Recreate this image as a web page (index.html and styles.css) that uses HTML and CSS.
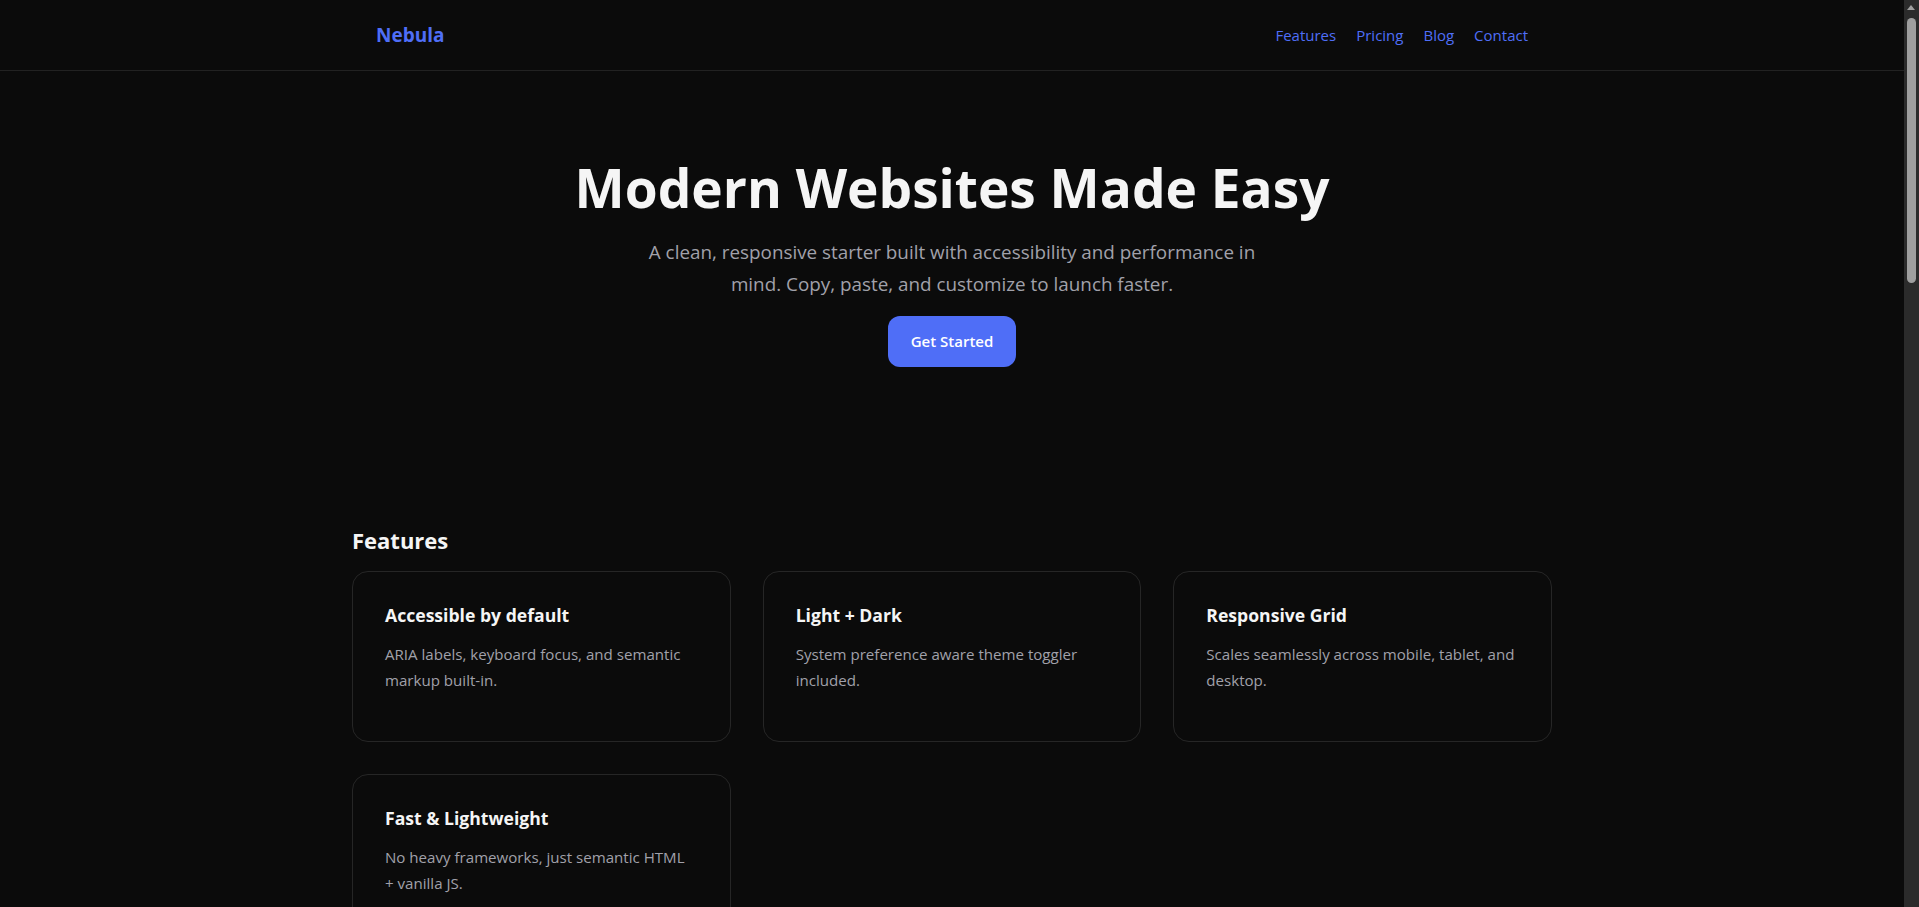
FILE: index.html
```html
<!DOCTYPE html>
<html lang="en">
<head>
<meta charset="utf-8">
<meta name="viewport" content="width=device-width, initial-scale=1">
<title>Nebula — Modern Websites Made Easy</title>
<link rel="stylesheet" href="styles.css">
</head>
<body>
<header class="site-header">
  <div class="container header-bar">
    <a class="logo" href="#">Nebula</a>
    <nav aria-label="Primary">
      <ul class="nav-list">
        <li><a href="#features">Features</a></li>
        <li><a href="#pricing">Pricing</a></li>
        <li><a href="#blog">Blog</a></li>
        <li><a href="#contact">Contact</a></li>
      </ul>
    </nav>
  </div>
</header>

<main>
  <section class="hero">
    <h1 class="hero-title">Modern Websites Made Easy</h1>
    <p class="hero-text">A clean, responsive starter built with accessibility and performance in mind. Copy, paste, and customize to launch faster.</p>
    <a class="btn" href="#features">Get Started</a>
  </section>

  <section class="container features" id="features">
    <h2 class="section-title">Features</h2>
    <div class="card-grid">
      <article class="card">
        <h3 class="card-title">Accessible by default</h3>
        <p class="card-text">ARIA labels, keyboard focus, and semantic markup built-in.</p>
      </article>
      <article class="card">
        <h3 class="card-title">Light + Dark</h3>
        <p class="card-text">System preference aware theme toggler included.</p>
      </article>
      <article class="card">
        <h3 class="card-title">Responsive Grid</h3>
        <p class="card-text">Scales seamlessly across mobile, tablet, and desktop.</p>
      </article>
      <article class="card">
        <h3 class="card-title">Fast &amp; Lightweight</h3>
        <p class="card-text">No heavy frameworks, just semantic HTML +&nbsp;vanilla JS.</p>
      </article>
    </div>
  </section>

  <section class="container section" id="pricing">
    <h2 class="section-title">Pricing</h2>
    <div class="card-grid">
      <article class="card">
        <h3 class="card-title">Starter</h3>
        <p class="card-text">Free forever for personal projects.</p>
      </article>
      <article class="card">
        <h3 class="card-title">Pro</h3>
        <p class="card-text">$12 per month with priority support.</p>
      </article>
      <article class="card">
        <h3 class="card-title">Team</h3>
        <p class="card-text">$39 per month for up to ten seats.</p>
      </article>
    </div>
  </section>

  <section class="container section" id="blog">
    <h2 class="section-title">Blog</h2>
    <div class="card-grid">
      <article class="card">
        <h3 class="card-title">Shipping a landing page in a day</h3>
        <p class="card-text">A practical walkthrough from blank folder to deploy.</p>
      </article>
      <article class="card">
        <h3 class="card-title">Designing for dark mode</h3>
        <p class="card-text">Contrast, color tokens and system preferences.</p>
      </article>
    </div>
  </section>

  <section class="container section" id="contact">
    <h2 class="section-title">Contact</h2>
    <p class="card-text">Questions? Write to hello@nebula.dev and we will get back to you.</p>
  </section>
</main>

<footer class="site-footer">
  <div class="container">© 2024 Nebula. All rights reserved.</div>
</footer>
</body>
</html>
```

FILE: styles.css
```css
:root {
  color-scheme: dark;
  --bg: #0b0b0b;
  --text: #f5f5f5;
  --muted: #a1a1aa;
  --border: #262626;
  --accent: #4f6ef7;
  --track: #2b2b2b;
  --thumb: #9f9f9f;
}

* { box-sizing: border-box; }

html {
  margin: 0;
  padding: 0;
  background: var(--track);
}

body {
  margin: 0 15px 0 0;
  padding: 0;
  min-height: 100vh;
  background: var(--bg);
  color: var(--text);
  font-family: "Segoe UI", "Open Sans", "Noto Sans", sans-serif;
  font-size: 15px;
  line-height: 1.6;
}

body::before {
  content: "";
  position: fixed;
  top: 5px;
  right: 4px;
  width: 0;
  height: 0;
  border-left: 4px solid transparent;
  border-right: 4px solid transparent;
  border-bottom: 5px solid var(--thumb);
}

body::after {
  content: "";
  position: fixed;
  top: 18px;
  right: 3px;
  width: 9px;
  height: 265px;
  border-radius: 5px;
  background: var(--thumb);
}

a { text-decoration: none; }

.container {
  max-width: 1200px;
  margin: 0 auto;
}

.site-header {
  border-bottom: 1px solid #222222;
}

.header-bar {
  height: 70px;
  padding: 0 24px;
  display: flex;
  align-items: center;
  justify-content: space-between;
}

.logo {
  color: var(--accent);
  font-weight: 700;
  font-size: 19px;
}

.nav-list {
  list-style: none;
  margin: 0;
  padding: 0;
  display: flex;
  gap: 20px;
}

.nav-list a {
  color: var(--accent);
  font-size: 15px;
}

.hero {
  padding: 84px 24px 80px;
  text-align: center;
}

.hero-title {
  margin: 0 0 16px;
  font-size: 53.2px;
  line-height: 65px;
  font-weight: 700;
}

.hero-text {
  margin: 0 auto 16px;
  max-width: 640px;
  font-size: 18.85px;
  line-height: 32px;
  color: var(--muted);
}

.btn {
  display: inline-block;
  background: var(--accent);
  color: #ffffff;
  font-weight: 600;
  font-size: 15px;
  line-height: 23px;
  padding: 14px 23px;
  border-radius: 12px;
}

.features {
  padding-top: 80px;
}

.section {
  padding-top: 120px;
  min-height: 560px;
}

.section-title {
  margin: 0 0 18px;
  font-size: 22px;
  line-height: 1.2;
  font-weight: 700;
}

.card-grid {
  display: grid;
  grid-template-columns: repeat(3, 1fr);
  gap: 32px;
}

.card {
  border: 1px solid var(--border);
  border-radius: 16px;
  padding: 32px;
}

.card-title {
  margin: 0 0 15px;
  font-size: 17.6px;
  line-height: 1.3;
  font-weight: 700;
}

.card-text {
  margin: 0 0 16px;
  font-size: 15.1px;
  line-height: 25.6px;
  color: var(--muted);
}

.site-footer {
  border-top: 1px solid #222222;
  padding: 32px 24px;
  color: var(--muted);
  text-align: center;
}
```
